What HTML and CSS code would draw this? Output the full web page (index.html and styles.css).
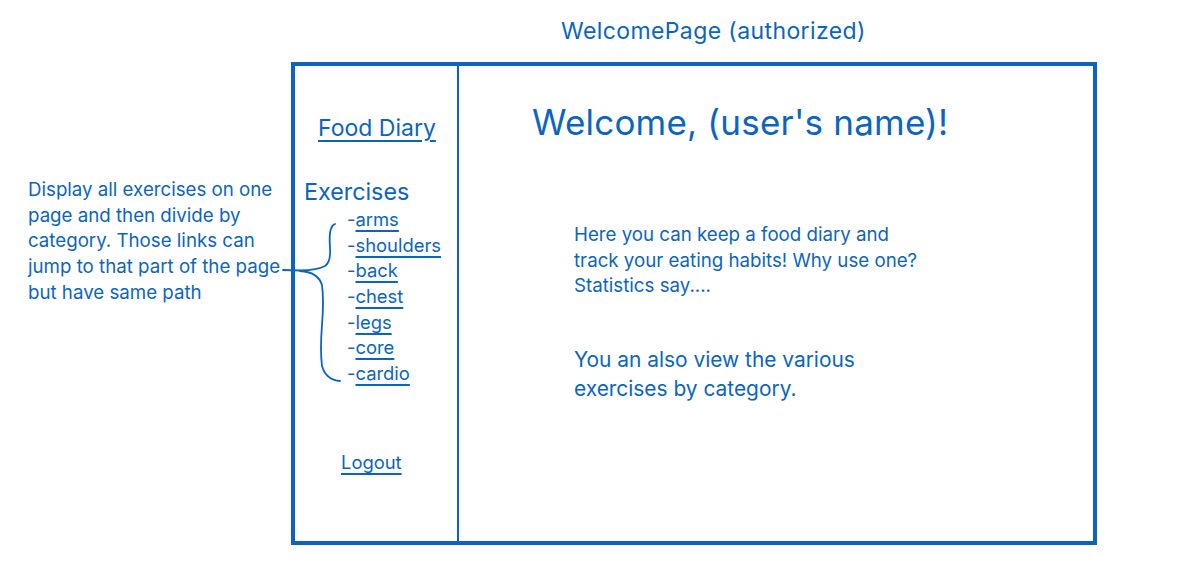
FILE: index.html
```html
<!DOCTYPE html>
<html>
<head>
<meta charset="utf-8">
<link rel="stylesheet" href="styles.css">
</head>
<body>
<div class="canvas">
  <div class="title">WelcomePage (authorized)</div>
  <div class="frame">
    <nav class="sidebar">
      <a class="link food">Food Diary</a>
      <div class="ex-head">Exercises</div>
      <ul class="ex-list">
        <li>-<a class="link">arms</a></li>
        <li>-<a class="link">shoulders</a></li>
        <li>-<a class="link">back</a></li>
        <li>-<a class="link">chest</a></li>
        <li>-<a class="link">legs</a></li>
        <li>-<a class="link">core</a></li>
        <li>-<a class="link">cardio</a></li>
      </ul>
      <a class="link logout">Logout</a>
    </nav>
    <main class="main">
      <h1 class="welcome">Welcome, (user's name)!</h1>
      <p class="intro">Here you can keep a food diary and<br>track your eating habits! Why use one?<br>Statistics say....</p>
      <p class="also">You an also view the various<br>exercises by category.</p>
    </main>
  </div>
  <div class="note">Display all exercises on one<br>page and then divide by<br>category. Those links can<br>jump to that part of the page<br>but have same path</div>
  <svg class="brace" width="1180" height="578" viewBox="0 0 1180 578">
    <path d="M283 270 L300 270.5 Q318 270 325 266 Q331 262 330 248 Q329 234 331 229 Q332 225 335 224" fill="none" stroke="#0b65c0" stroke-width="1.8" stroke-linecap="round"/>
    <path d="M300 271 Q318 272 322 285 Q324 300 322 325 Q320 350 322 366 Q326 380 340 381" fill="none" stroke="#0b65c0" stroke-width="1.8" stroke-linecap="round"/>
  </svg>
</div>
</body>
</html>
```

FILE: styles.css
```css
* { box-sizing: border-box; }
html, body { margin: 0; padding: 0; background: #fff; }
body {
  font-family: "Inter", "Liberation Sans", sans-serif;
  color: #0b65c0;
}
.canvas {
  position: relative;
  width: 1180px;
  height: 578px;
  padding-top: 18px;
  overflow: hidden;
}
.title {
  margin-left: 561px;
  font-size: 23px;
  letter-spacing: 0.4px;
  line-height: 26px;
  height: 26px;
  margin-bottom: 18px;
  white-space: nowrap;
}
.frame {
  margin-left: 291px;
  width: 806px;
  height: 483px;
  border: 4px solid #0b65c0;
  display: flex;
}
.sidebar {
  width: 164px;
  flex: none;
  border-right: 2px solid #0b65c0;
  display: flex;
  flex-direction: column;
  align-items: flex-start;
  padding-top: 49px;
}
.link {
  text-decoration: underline;
  text-decoration-thickness: 2px;
  text-underline-offset: 4px;
  white-space: nowrap;
}
.food {
  font-size: 23px;
  line-height: 26px;
  margin-left: 23px;
}
.ex-head {
  font-size: 23.3px;
  line-height: 26px;
  margin-top: 38px;
  margin-left: 9px;
}
.ex-list {
  list-style: none;
  margin: 2px 0 0 52px;
  padding: 0;
  font-size: 18.4px;
  line-height: 25.67px;
}
.ex-list li { white-space: nowrap; }
.logout {
  font-size: 18.4px;
  line-height: 24px;
  margin-top: 63px;
  margin-left: 46px;
}
.main {
  flex: 1;
  padding: 34px 0 0 73px;
}
.welcome {
  margin: 0;
  font-weight: 400;
  font-size: 35px;
  letter-spacing: 0.2px;
  line-height: 44px;
  white-space: nowrap;
}
.intro {
  margin: 78px 0 0 42px;
  font-size: 18.7px;
  line-height: 25.7px;
  white-space: nowrap;
}
.also {
  margin: 46px 0 0 42px;
  font-size: 20.9px;
  line-height: 29px;
  white-space: nowrap;
}
.note {
  position: absolute;
  left: 28px;
  top: 177px;
  font-size: 18.7px;
  line-height: 25.7px;
  white-space: nowrap;
}
.brace {
  position: absolute;
  left: 0;
  top: 0;
  pointer-events: none;
}
```
